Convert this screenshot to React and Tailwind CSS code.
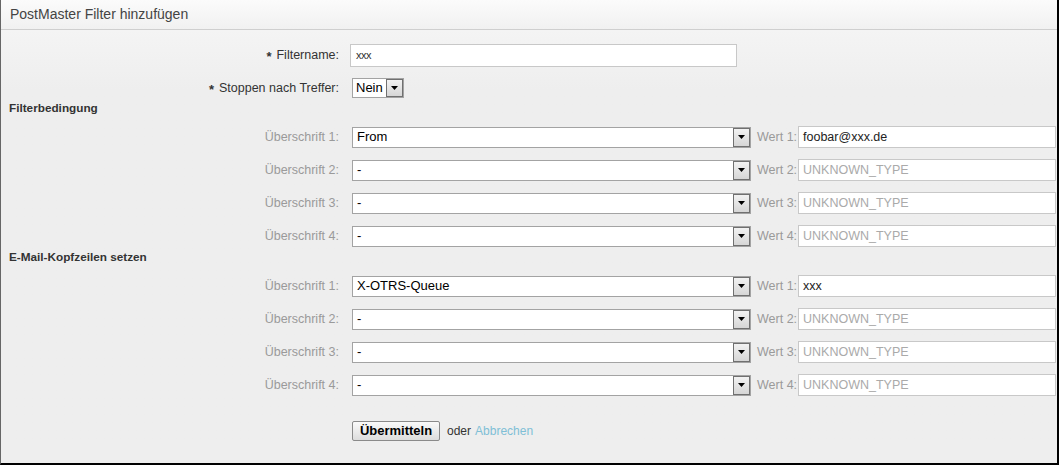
import React from "react";

const font = { fontFamily: '"Liberation Sans", Arial, sans-serif' };

function Arrow() {
  return (
    <div className="flex h-full w-[17px] items-center justify-center border border-[#707070] bg-gradient-to-b from-[#f2f2f2] to-[#d6d6d6]">
      <svg width="7" height="4" viewBox="0 0 7 4">
        <polygon points="0,0 7,0 3.5,4" fill="#000" />
      </svg>
    </div>
  );
}

function Select({ value, width }) {
  return (
    <div className={`flex h-[21px] items-stretch border border-[#a3a3a3] bg-white ${width}`}>
      <div className="flex flex-1 items-center pl-[4px] text-[13px] text-black">{value}</div>
      <Arrow />
    </div>
  );
}

function Row({ n, head, wert }) {
  const isPlaceholder = wert === null;
  return (
    <div className="mt-[11px] flex h-[22px] items-center first:mt-[11px]">
      <div className="w-[338px] whitespace-nowrap text-right text-[12.5px] text-[#9a9a9a]">Überschrift {n}:</div>
      <div className="ml-[13px]">
        <Select value={head} width="w-[399px]" />
      </div>
      <div className="ml-[6px] w-[37px] whitespace-nowrap text-[12.5px] text-[#9a9a9a]">Wert {n}:</div>
      <div className="ml-[4px] flex h-[22px] w-[258px] items-center border border-[#c8c8c8] bg-white pl-[4px] text-[12.5px]">
        {isPlaceholder ? (
          <span className="text-[#aaaaaa]">UNKNOWN_TYPE</span>
        ) : (
          <span className="text-[#222]">{wert}</span>
        )}
      </div>
    </div>
  );
}

function Star() {
  return <span className="mr-[5px] inline-block translate-y-[2px] text-[13px] font-bold leading-none">*</span>;
}

export default function App() {
  return (
    <div style={font} className="h-[465px] w-[1059px] bg-white">
      <div className="flex h-[465px] w-[1059px] flex-col border-b-2 border-l border-r-2 border-b-black border-l-[#666] border-r-black bg-[#eeeeee]">
        <div className="flex h-[30px] items-center border-b border-[#cfcfcf] bg-gradient-to-b from-[#fbfbfb] to-[#f1f1f1] pl-[9px] text-[14px] text-[#444]">
          PostMaster Filter hinzufügen
        </div>
        <div className="flex flex-col bg-gradient-to-b from-[#f4f4f4] to-[#eeeeee] to-[60px] pt-[14px]">
          <div className="flex h-[22px] items-center">
            <div className="w-[338px] whitespace-nowrap text-right text-[12.5px] text-[#333]">
              <Star />Filtername:
            </div>
            <div className="ml-[11px] flex h-[23px] w-[387px] items-center border border-[#c8c8c8] bg-white pl-[5px] text-[11px] tracking-[-0.5px] text-[#333]">
              xxx
            </div>
          </div>
          <div className="mt-[12px] flex h-[20px] items-center">
            <div className="w-[338px] whitespace-nowrap text-right text-[12.5px] text-[#333]">
              <Star />Stoppen nach Treffer:
            </div>
            <div className="ml-[13px] flex h-[20px] w-[52px] items-stretch border border-[#a3a3a3] bg-white">
              <div className="flex flex-1 items-center pl-[3px] text-[13px] text-black">Nein</div>
              <Arrow />
            </div>
          </div>
          <div className="mt-[3px] h-[14px] pl-[8px] text-[11.75px] font-bold leading-[14px] text-[#333]">Filterbedingung</div>
          <div className="flex flex-col">
            <Row n={1} head="From" wert="foobar@xxx.de" />
            <Row n={2} head="-" wert={null} />
            <Row n={3} head="-" wert={null} />
            <Row n={4} head="-" wert={null} />
          </div>
          <div className="mt-[3px] h-[14px] pl-[8px] text-[11.75px] font-bold leading-[14px] text-[#333]">E-Mail-Kopfzeilen setzen</div>
          <div className="flex flex-col">
            <Row n={1} head="X-OTRS-Queue" wert="xxx" />
            <Row n={2} head="-" wert={null} />
            <Row n={3} head="-" wert={null} />
            <Row n={4} head="-" wert={null} />
          </div>
          <div className="mt-[25px] flex h-[20px] items-center pl-[351px]">
            <div className="flex h-[20px] w-[88px] items-center justify-center rounded-[2px] border border-[#8a8a8a] bg-gradient-to-b from-[#fafafa] to-[#dcdcdc] text-[13px] font-bold text-black">
              Übermitteln
            </div>
            <span className="ml-[7px] text-[12px] text-[#333]">oder</span>
            <span className="ml-[4px] text-[12px] text-[#7fbfd6]">Abbrechen</span>
          </div>
        </div>
      </div>
    </div>
  );
}
